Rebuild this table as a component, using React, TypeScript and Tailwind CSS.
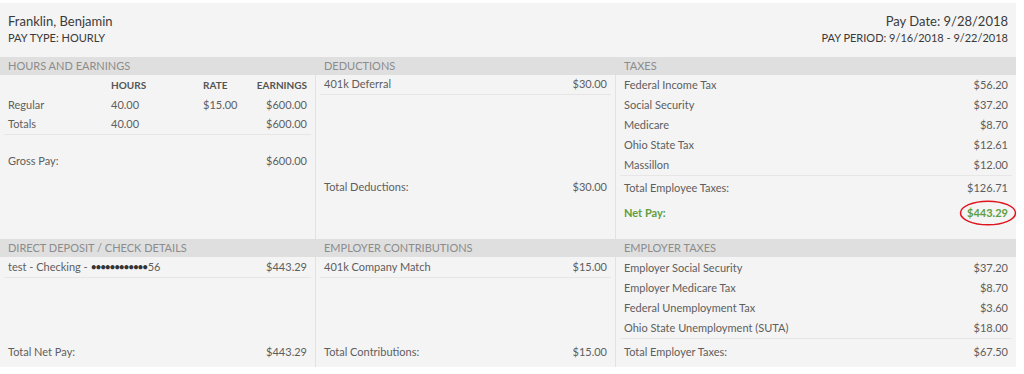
import React from 'react';

const font = { fontFamily: 'Lato, "Open Sans", sans-serif' };

function Row({ label, value, className = '' }: { label: React.ReactNode; value: string; className?: string }) {
    return (
        <div className={`flex h-5 items-center justify-between px-1 ${className}`}>
            <span>{label}</span>
            <span>{value}</span>
        </div>
    );
}

function SectionHead({ title }: { title: string }) {
    return (
        <div className="flex h-[18px] items-center bg-[#dfdfdf] px-2 text-[11px] uppercase text-[#8c8c8c]">
            {title}
        </div>
    );
}

export default function App() {
    const taxes = [
        ['Federal Income Tax', '$56.20'],
        ['Social Security', '$37.20'],
        ['Medicare', '$8.70'],
        ['Ohio State Tax', '$12.61'],
        ['Massillon', '$12.00'],
    ];
    const employerTaxes = [
        ['Employer Social Security', '$37.20'],
        ['Employer Medicare Tax', '$8.70'],
        ['Federal Unemployment Tax', '$3.60'],
        ['Ohio State Unemployment (SUTA)', '$18.00'],
    ];

    return (
        <div className="h-[374px] w-[1024px] bg-white pt-[3px]" style={font}>
            <div className="w-[1016px] bg-[#f4f4f4] text-[11px] text-[#5e5e5e]">
                {/* Header */}
                <div className="flex h-[54px] justify-between px-2 pt-[9px] text-[#3a3a3a]">
                    <div>
                        <div className="text-[13px] leading-[18px]">Franklin, Benjamin</div>
                        <div className="text-[11px] leading-4">PAY TYPE: HOURLY</div>
                    </div>
                    <div className="text-right">
                        <div className="text-[13px] leading-[18px]">Pay Date: 9/28/2018</div>
                        <div className="text-[11px] leading-4">PAY PERIOD: 9/16/2018 - 9/22/2018</div>
                    </div>
                </div>

                {/* Earnings / Deductions / Taxes */}
                <div className="grid grid-cols-[316px_300px_400px]">
                    <div>
                        <SectionHead title="Hours and Earnings" />
                        <div className="h-[164px] border-r border-[#e2e2e2] px-1">
                            <div className="grid h-5 grid-cols-[103px_92px_1fr] items-center px-1 text-[10px] font-bold text-[#555]">
                                <span />
                                <span>HOURS</span>
                                <div className="flex justify-between">
                                    <span>RATE</span>
                                    <span>EARNINGS</span>
                                </div>
                            </div>
                            <div className="grid h-5 grid-cols-[103px_92px_1fr] items-center px-1">
                                <span>Regular</span>
                                <span>40.00</span>
                                <div className="flex justify-between">
                                    <span>$15.00</span>
                                    <span>$600.00</span>
                                </div>
                            </div>
                            <div className="grid h-5 grid-cols-[103px_92px_1fr] items-center border-b border-[#e6e6e6] px-1">
                                <span>Totals</span>
                                <span>40.00</span>
                                <div className="flex justify-end">
                                    <span>$600.00</span>
                                </div>
                            </div>
                            <Row label="Gross Pay:" value="$600.00" className="mt-4" />
                        </div>
                    </div>

                    <div>
                        <SectionHead title="Deductions" />
                        <div className="h-[164px] border-r border-[#e2e2e2] px-1">
                            <Row label="401k Deferral" value="$30.00" className="border-b border-[#e6e6e6]" />
                            <Row label="Total Deductions:" value="$30.00" className="mt-[82px]" />
                        </div>
                    </div>

                    <div>
                        <SectionHead title="Taxes" />
                        <div className="h-[164px] px-1">
                            <div className="border-b border-[#e6e6e6]">
                                {taxes.map(([l, v]) => (
                                    <Row key={l} label={l} value={v} />
                                ))}
                            </div>
                            <div className="flex h-6 items-center justify-between px-1">
                                <span>Total Employee Taxes:</span>
                                <span>$126.71</span>
                            </div>
                            <div className="relative flex h-[26px] items-center justify-between px-1 font-bold text-[#5e9e3f]">
                                <span>Net Pay:</span>
                                <span>$443.29</span>
                                <svg className="absolute right-[-5px] top-0" width="58" height="26" viewBox="0 0 58 26">
                                    <ellipse cx="29" cy="13" rx="27.5" ry="11.8" fill="none" stroke="#e0141e" strokeWidth="1.5" />
                                </svg>
                            </div>
                        </div>
                    </div>
                </div>

                {/* Deposit / Contributions / Employer taxes */}
                <div className="grid grid-cols-[316px_300px_400px]">
                    <div>
                        <SectionHead title="Direct Deposit / Check Details" />
                        <div className="flex h-[110px] flex-col border-r border-[#e2e2e2] px-1 pb-[3px] pt-[1px]">
                            <Row
                                label={
                                    <>
                                        test - Checking - <span className="tracking-[-1.7px] text-[#333]">••••••••••••</span>
                                        <span className="ml-[1px]">56</span>
                                    </>
                                }
                                value="$443.29"
                                className="border-b border-[#e6e6e6]"
                            />
                            <div className="mt-auto flex h-6 items-center justify-between px-1">
                                <span>Total Net Pay:</span>
                                <span>$443.29</span>
                            </div>
                        </div>
                    </div>

                    <div>
                        <SectionHead title="Employer Contributions" />
                        <div className="flex h-[110px] flex-col border-r border-[#e2e2e2] px-1 pb-[3px] pt-[1px]">
                            <Row label="401k Company Match" value="$15.00" className="border-b border-[#e6e6e6]" />
                            <div className="mt-auto flex h-6 items-center justify-between px-1">
                                <span>Total Contributions:</span>
                                <span>$15.00</span>
                            </div>
                        </div>
                    </div>

                    <div>
                        <SectionHead title="Employer Taxes" />
                        <div className="flex h-[110px] flex-col px-1 pb-[3px] pt-[1px]">
                            <div className="border-b border-[#e6e6e6]">
                                {employerTaxes.map(([l, v]) => (
                                    <Row key={l} label={l} value={v} />
                                ))}
                            </div>
                            <div className="mt-auto flex h-6 items-center justify-between px-1">
                                <span>Total Employer Taxes:</span>
                                <span>$67.50</span>
                            </div>
                        </div>
                    </div>
                </div>
            </div>
        </div>
    );
}
